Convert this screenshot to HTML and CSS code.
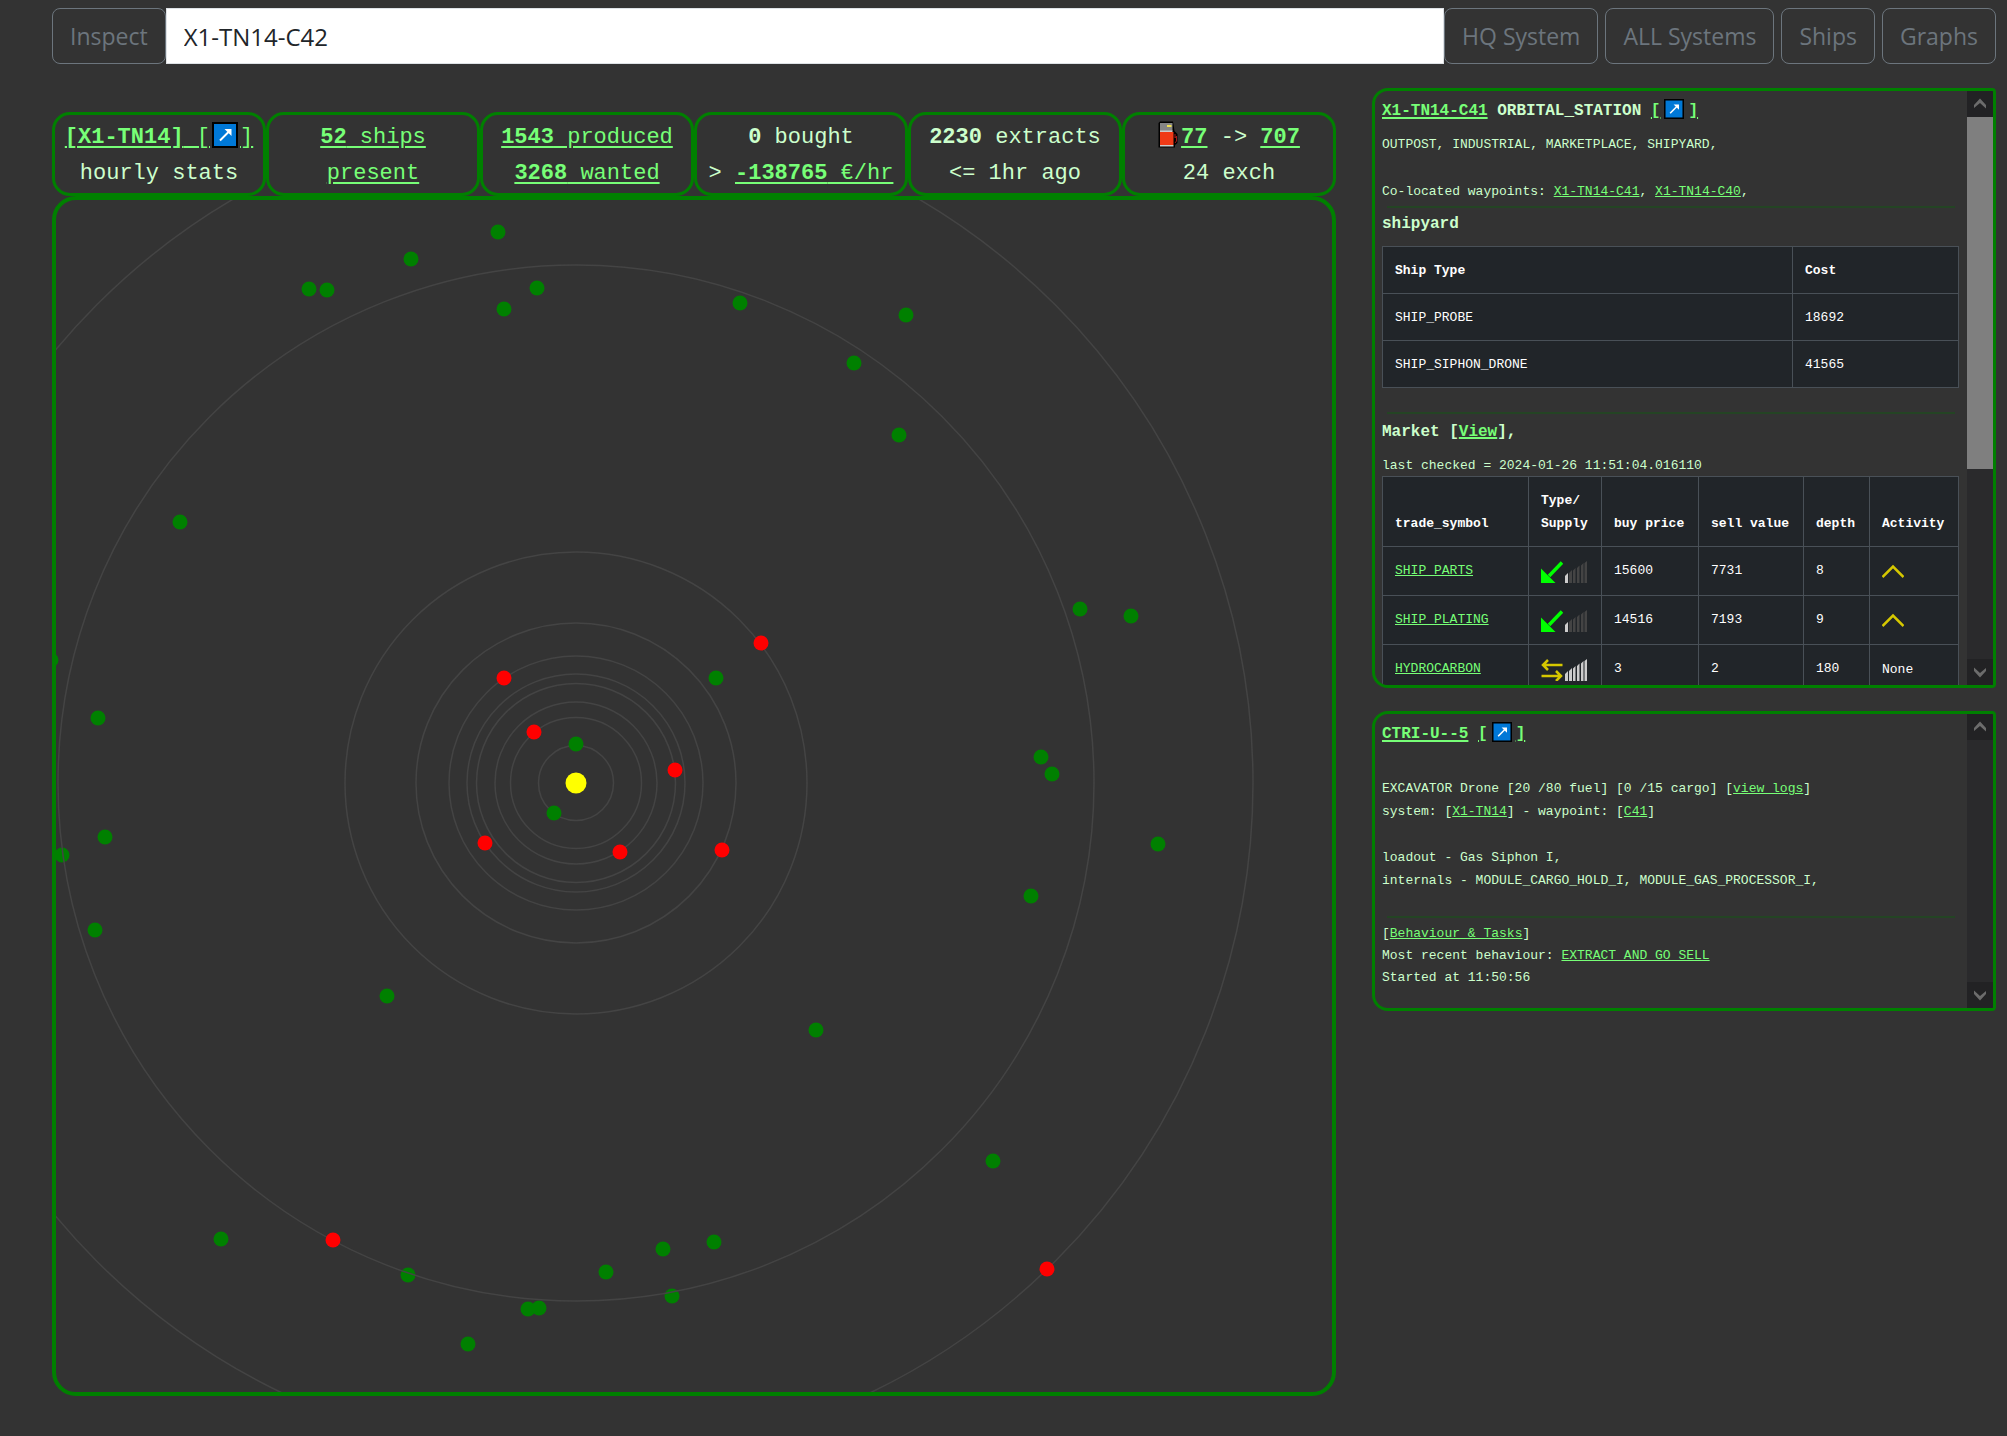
FILE: index.html
```html
<!DOCTYPE html>
<html lang="en">
<head>
<meta charset="utf-8">
<title>X1-TN14</title>
<link rel="stylesheet" href="styles.css">
</head>
<body>
<svg class="defs" aria-hidden="true">
  <symbol id="open" viewBox="0 0 26 26">
    <rect x="1" y="1" width="24" height="24" fill="#0078d7" stroke="#000" stroke-width="2"/>
    <path d="M8 18.500L18 8.500" stroke="#fff" stroke-width="2" fill="none"/>
    <path d="M12.500 7H19.500V14Z" fill="#fff"/>
  </symbol>
  <symbol id="import" viewBox="0 0 22 22">
    <path d="M21 1.500L8 15" stroke="#0f0" stroke-width="3.500" fill="none"/>
    <path d="M0 7.500V22H14.500L9.500 17L5 12.500Z" fill="#0f0"/>
  </symbol>
  <symbol id="exchange" viewBox="0 0 22 22">
    <path d="M7 1L2 6L7 11M2 6H21.500M15 12L20 17L15 22M20 17H0.500" stroke="#d6c800" stroke-width="2.500" fill="none"/>
  </symbol>
  <symbol id="bars" viewBox="0 0 22 22">
    <path d="M0 15L3 12V22H0ZM4 12L7 9V22H4ZM8 9.500L10.500 7V22H8ZM12 7L14.500 4.500V22H12ZM16 4.500L18.500 2V22H16ZM19.500 2L22 0V22H19.500Z"/>
  </symbol>
  <symbol id="bar-one" viewBox="0 0 22 22">
    <path d="M0 15L3 12V22H0Z"/>
  </symbol>
  <symbol id="rising" viewBox="0 0 22 22">
    <path d="M0.500 16L11 5.500L21.500 16" stroke="#d6c800" stroke-width="2.500" fill="none"/>
  </symbol>
  <symbol id="up" viewBox="0 0 26 26">
    <path d="M7 17V14L13 7.500L19 14V17.500L13 12Z"/>
  </symbol>
</svg>

<header class="topbar">
  <button class="btn" type="submit" form="inspect">Inspect</button>
  <form class="search" id="inspect"><input class="search-input" type="text" aria-label="Symbol to inspect" value="X1-TN14-C42"></form>
  <nav class="nav">
    <button class="btn" type="button">HQ System</button>
    <button class="btn" type="button">ALL Systems</button>
    <button class="btn" type="button">Ships</button>
    <button class="btn" type="button">Graphs</button>
  </nav>
</header>

<main class="layout">
  <section class="system">
    <div class="stats">
      <div class="stat"><a href="#"><b>[X1-TN14]</b> [<svg class="open-icon"><use href="#open"/></svg>]</a><br>hourly stats</div>
      <div class="stat"><a href="#"><b>52</b> ships<br>present</a></div>
      <div class="stat"><a href="#"><b>1543</b> produced</a><br><a href="#"><b>3268</b> wanted</a></div>
      <div class="stat"><b>0</b> bought<br>&gt; <a href="#"><b>-138765</b> €/hr</a></div>
      <div class="stat"><b>2230</b> extracts<br>&lt;= 1hr ago</div>
      <div class="stat"><svg class="fuel-icon" viewBox="0 0 20 27"><path d="M2 .500H15L16.500 10L19.500 13V22L17 24V26.500H.500V2Z" fill="#000"/><path d="M2 2H14.500V10H2Z" fill="#858585"/><path d="M2 9.500H14.500V11H2ZM2 24H15.500V25.500H2Z" fill="#ccc"/><path d="M9 4H13.500V6H9Z" fill="#f0e050"/><path d="M2 11H15.500V24H2Z" fill="#f03a17"/><path d="M17 13V17L18.500 15V20L17 22" stroke="#a01818" fill="none"/></svg><a href="#"><b>77</b></a> -&gt; <a href="#"><b>707</b></a><br>24 exch</div>
    </div>
    <svg class="map" viewBox="-520 -583 1276 1192" role="img" aria-label="Map of system X1-TN14">
      <g class="waypoint">
        <circle cx="-78" cy="-551" r="7.500"/><circle cx="-165" cy="-524" r="7.500"/>
        <circle cx="-267" cy="-494" r="7.500"/><circle cx="-249" cy="-493" r="7.500"/>
        <circle cx="-39" cy="-495" r="7.500"/><circle cx="-72" cy="-474" r="7.500"/>
        <circle cx="-396" cy="-261" r="7.500"/><circle cx="-525" cy="-123" r="7.500"/>
        <circle cx="-478" cy="-65" r="7.500"/><circle cx="164" cy="-480" r="7.500"/>
        <circle cx="330" cy="-468" r="7.500"/><circle cx="278" cy="-420" r="7.500"/>
        <circle cx="323" cy="-348" r="7.500"/><circle cx="504" cy="-174" r="7.500"/>
        <circle cx="555" cy="-167" r="7.500"/><circle cx="140" cy="-105" r="7.500"/>
        <circle cx="465" cy="-26" r="7.500"/><circle cx="476" cy="-9" r="7.500"/>
        <circle cx="-471" cy="54" r="7.500"/><circle cx="-514" cy="72" r="7.500"/>
        <circle cx="-481" cy="147" r="7.500"/><circle cx="-189" cy="213" r="7.500"/>
        <circle cx="-355" cy="456" r="7.500"/><circle cx="-168" cy="492" r="7.500"/>
        <circle cx="87" cy="466" r="7.500"/><circle cx="30" cy="489" r="7.500"/>
        <circle cx="96" cy="513" r="7.500"/><circle cx="-48" cy="526" r="7.500"/>
        <circle cx="-37" cy="525" r="7.500"/><circle cx="-108" cy="561" r="7.500"/>
        <circle cx="582" cy="61" r="7.500"/><circle cx="455" cy="113" r="7.500"/>
        <circle cx="240" cy="247" r="7.500"/><circle cx="417" cy="378" r="7.500"/>
        <circle cx="138" cy="459" r="7.500"/>
      </g>
      <g class="orbit">
        <circle r="37.500"/><circle r="65.500"/><circle r="81"/><circle r="99.500"/><circle r="109"/>
        <circle r="127"/><circle r="160"/><circle r="231"/><circle r="518"/><circle r="677"/>
      </g>
      <g class="waypoint"><circle cx="0" cy="-39" r="7.500"/><circle cx="-22" cy="30" r="7.500"/></g>
      <g class="planet">
        <circle cx="-72" cy="-105" r="7.500"/><circle cx="-42" cy="-51" r="7.500"/>
        <circle cx="99" cy="-13" r="7.500"/><circle cx="185" cy="-140" r="7.500"/>
        <circle cx="-91" cy="60" r="7.500"/><circle cx="44" cy="69" r="7.500"/>
        <circle cx="146" cy="67" r="7.500"/><circle cx="-243" cy="457" r="7.500"/>
        <circle cx="471" cy="486" r="7.500"/>
      </g>
      <circle class="star" r="10.500"/>
    </svg>
  </section>

  <aside class="side">
    <section class="panel panel-tall">
      <div class="panel-body">
        <h2 class="title"><a href="#">X1-TN14-C41</a> ORBITAL_STATION <a href="#">[<svg class="open-icon"><use href="#open"/></svg>]</a></h2>
        <p class="traits">OUTPOST, INDUSTRIAL, MARKETPLACE, SHIPYARD,</p>
        <p>Co-located waypoints: <a href="#">X1-TN14-C41</a>, <a href="#">X1-TN14-C40</a>,</p>
        <hr class="rule">
        <h3 class="subtitle">shipyard</h3>
        <table class="table">
          <colgroup><col class="c-ship"><col></colgroup>
          <thead><tr><th>Ship Type</th><th>Cost</th></tr></thead>
          <tbody>
            <tr><td>SHIP_PROBE</td><td>18692</td></tr>
            <tr><td>SHIP_SIPHON_DRONE</td><td>41565</td></tr>
          </tbody>
        </table>
        <hr class="rule rule-spaced">
        <h3 class="subtitle market">Market [<a href="#">View</a>],</h3>
        <p class="checked">last checked = 2024-01-26 11:51:04.016110</p>
        <table class="table">
          <colgroup><col class="c-symbol"><col class="c-type"><col class="c-buy"><col class="c-sell"><col class="c-depth"><col></colgroup>
          <thead><tr><th>trade_symbol</th><th>Type/<br>Supply</th><th>buy price</th><th>sell value</th><th>depth</th><th>Activity</th></tr></thead>
          <tbody>
            <tr><td><a href="#">SHIP_PARTS</a></td><td><div class="icons"><svg class="icon"><use href="#import"/></svg><svg class="icon"><use class="bar-off" href="#bars"/><use class="bar-on" href="#bar-one"/></svg></div></td><td>15600</td><td>7731</td><td>8</td><td><div class="icons"><svg class="icon"><use href="#rising"/></svg></div></td></tr>
            <tr><td><a href="#">SHIP_PLATING</a></td><td><div class="icons"><svg class="icon"><use href="#import"/></svg><svg class="icon"><use class="bar-off" href="#bars"/><use class="bar-on" href="#bar-one"/></svg></div></td><td>14516</td><td>7193</td><td>9</td><td><div class="icons"><svg class="icon"><use href="#rising"/></svg></div></td></tr>
            <tr><td><a href="#">HYDROCARBON</a></td><td><div class="icons"><svg class="icon"><use href="#exchange"/></svg><svg class="icon"><use class="bar-on" href="#bars"/></svg></div></td><td>3</td><td>2</td><td>180</td><td><div class="icons">None</div></td></tr>
          </tbody>
        </table>
      </div>
      <div class="scrollbar" aria-hidden="true">
        <svg class="scroll-btn"><use href="#up"/></svg>
        <div class="track"><div class="thumb"></div></div>
        <svg class="scroll-btn scroll-down"><use href="#up"/></svg>
      </div>
    </section>

    <section class="panel panel-short">
      <div class="panel-body">
        <h2 class="title title-ship"><a href="#">CTRI-U--5</a> <a href="#">[<svg class="open-icon"><use href="#open"/></svg>]</a></h2>
        <p>EXCAVATOR Drone [20 /80 fuel] [0 /15 cargo] [<a href="#">view logs</a>]<br>system: [<a href="#">X1-TN14</a>] - waypoint: [<a href="#">C41</a>]</p>
        <p class="loadout">loadout - Gas Siphon I,<br>internals - MODULE_CARGO_HOLD_I, MODULE_GAS_PROCESSOR_I,</p>
        <hr class="rule rule-spaced">
        <p class="behaviour">[<a href="#">Behaviour &amp; Tasks</a>]<br>Most recent behaviour: <a href="#">EXTRACT_AND_GO_SELL</a><br>Started at 11:50:56</p>
      </div>
      <div class="scrollbar" aria-hidden="true">
        <svg class="scroll-btn"><use href="#up"/></svg>
        <div class="track"></div>
        <svg class="scroll-btn scroll-down"><use href="#up"/></svg>
      </div>
    </section>
  </aside>
</main>
</body>
</html>
```
FILE: styles.css
```css
* { box-sizing: border-box; }

body {
  margin: 0;
  padding: 8px 11px 40px 52px;
  background: #333;
  color: #cfc;
  font: 13px/23px "Liberation Mono", monospace;
}

a { color: #7f7; }
h2, h3, p { margin: 0; }
.defs { display: none; }

/* Top bar */
.topbar { display: flex; height: 56px; }
.nav { display: flex; gap: 7px; }
.btn {
  padding: 0 17px;
  border: 1px solid #6c757d;
  border-radius: 8px;
  background: transparent;
  color: #6c757d;
  font: 23px "Open Sans", sans-serif;
}
.search { flex: 1; display: flex; }
.search-input {
  flex: 1;
  min-width: 0;
  padding: 0 17px;
  border: 1px solid #dee2e6;
  border-radius: 0;
  background: #fff;
  color: #212529;
  font: 24px "Open Sans", sans-serif;
}

/* Two columns: the system map, the details */
.layout {
  display: grid;
  grid-template-columns: 1284fr 624fr;
  gap: 36px;
  align-items: start;
  margin-top: 24px;
}
.system { padding-top: 24px; }

.stats { display: grid; grid-template-columns: repeat(6, 1fr); }
.stat {
  padding: 5px 0 1px;
  border: 3px solid green;
  border-radius: 18px;
  font-size: 22px;
  line-height: 36px;
  text-align: center;
  white-space: nowrap;
}
.stat a { text-decoration-thickness: 2px; text-underline-offset: 3px; }
.open-icon { width: 26px; height: 26px; margin: 0 2px; vertical-align: -5px; }
.fuel-icon { width: 20px; height: 27px; margin-right: 3px; vertical-align: -5px; }

.map {
  display: block;
  width: 100%;
  aspect-ratio: 1284 / 1200;
  border: 4px solid green;
  border-radius: 24px;
}
.orbit { fill: none; stroke: #444; stroke-width: 1.500px; }
.waypoint { fill: green; }
.planet { fill: red; }
.star { fill: yellow; }

/* Detail panels */
.side { display: grid; gap: 23px; }
.panel {
  display: flex;
  border: 3px solid green;
  border-radius: 16px 4px 4px 16px;
  overflow: hidden;
}
.panel-tall { height: 600px; }
.panel-short { height: 300px; }
.panel-body { flex: 1; min-width: 0; padding: 0 8px 0 7px; overflow: hidden; }

.title { margin-bottom: 2px; font-size: 16px; line-height: 40px; }
.title a { text-decoration-thickness: 2px; text-underline-offset: 2px; }
.title .open-icon { width: 20px; height: 20px; margin: 0 4px; vertical-align: -4px; }
.title-ship { margin-bottom: 23px; }
.traits { margin-bottom: 24px; }
.rule { height: 2px; margin: 3px 4px 5px 5px; border: 0; background: #244424; }
.rule-spaced { margin-top: 24px; }
.subtitle { margin-bottom: 10px; font-size: 16px; line-height: 23px; }
.subtitle a { text-decoration-thickness: 2px; }
.market { margin: 7px 0 11px; }
.checked { line-height: 21px; }
.loadout { margin-top: 23px; }
.behaviour { line-height: 22px; }

.table {
  width: 100%;
  table-layout: fixed;
  border-collapse: collapse;
  background: #212529;
  color: #fff;
}
.table th, .table td {
  padding: 12px 0 11px 12px;
  border: 1px solid #495057;
  text-align: left;
  vertical-align: top;
  white-space: nowrap;
}
.table th { vertical-align: bottom; }
.c-ship { width: 410px; }
.c-symbol { width: 146px; }
.c-type { width: 73px; }
.c-buy { width: 97px; }
.c-sell { width: 105px; }
.c-depth { width: 66px; }
.icons { display: flex; align-items: center; gap: 2px; height: 25px; }
.icon { width: 22px; height: 22px; }
.bar-off { fill: #444; }
.bar-on { fill: #ccc; }

.scrollbar { display: flex; flex-direction: column; width: 26px; background: #2a2a2c; }
.scroll-btn { width: 26px; height: 26px; background: #222224; fill: #6c6c6c; }
.scroll-down { transform: rotate(180deg); }
.track { flex: 1; }
.thumb { height: 65%; background: #7f7f7f; }
```
